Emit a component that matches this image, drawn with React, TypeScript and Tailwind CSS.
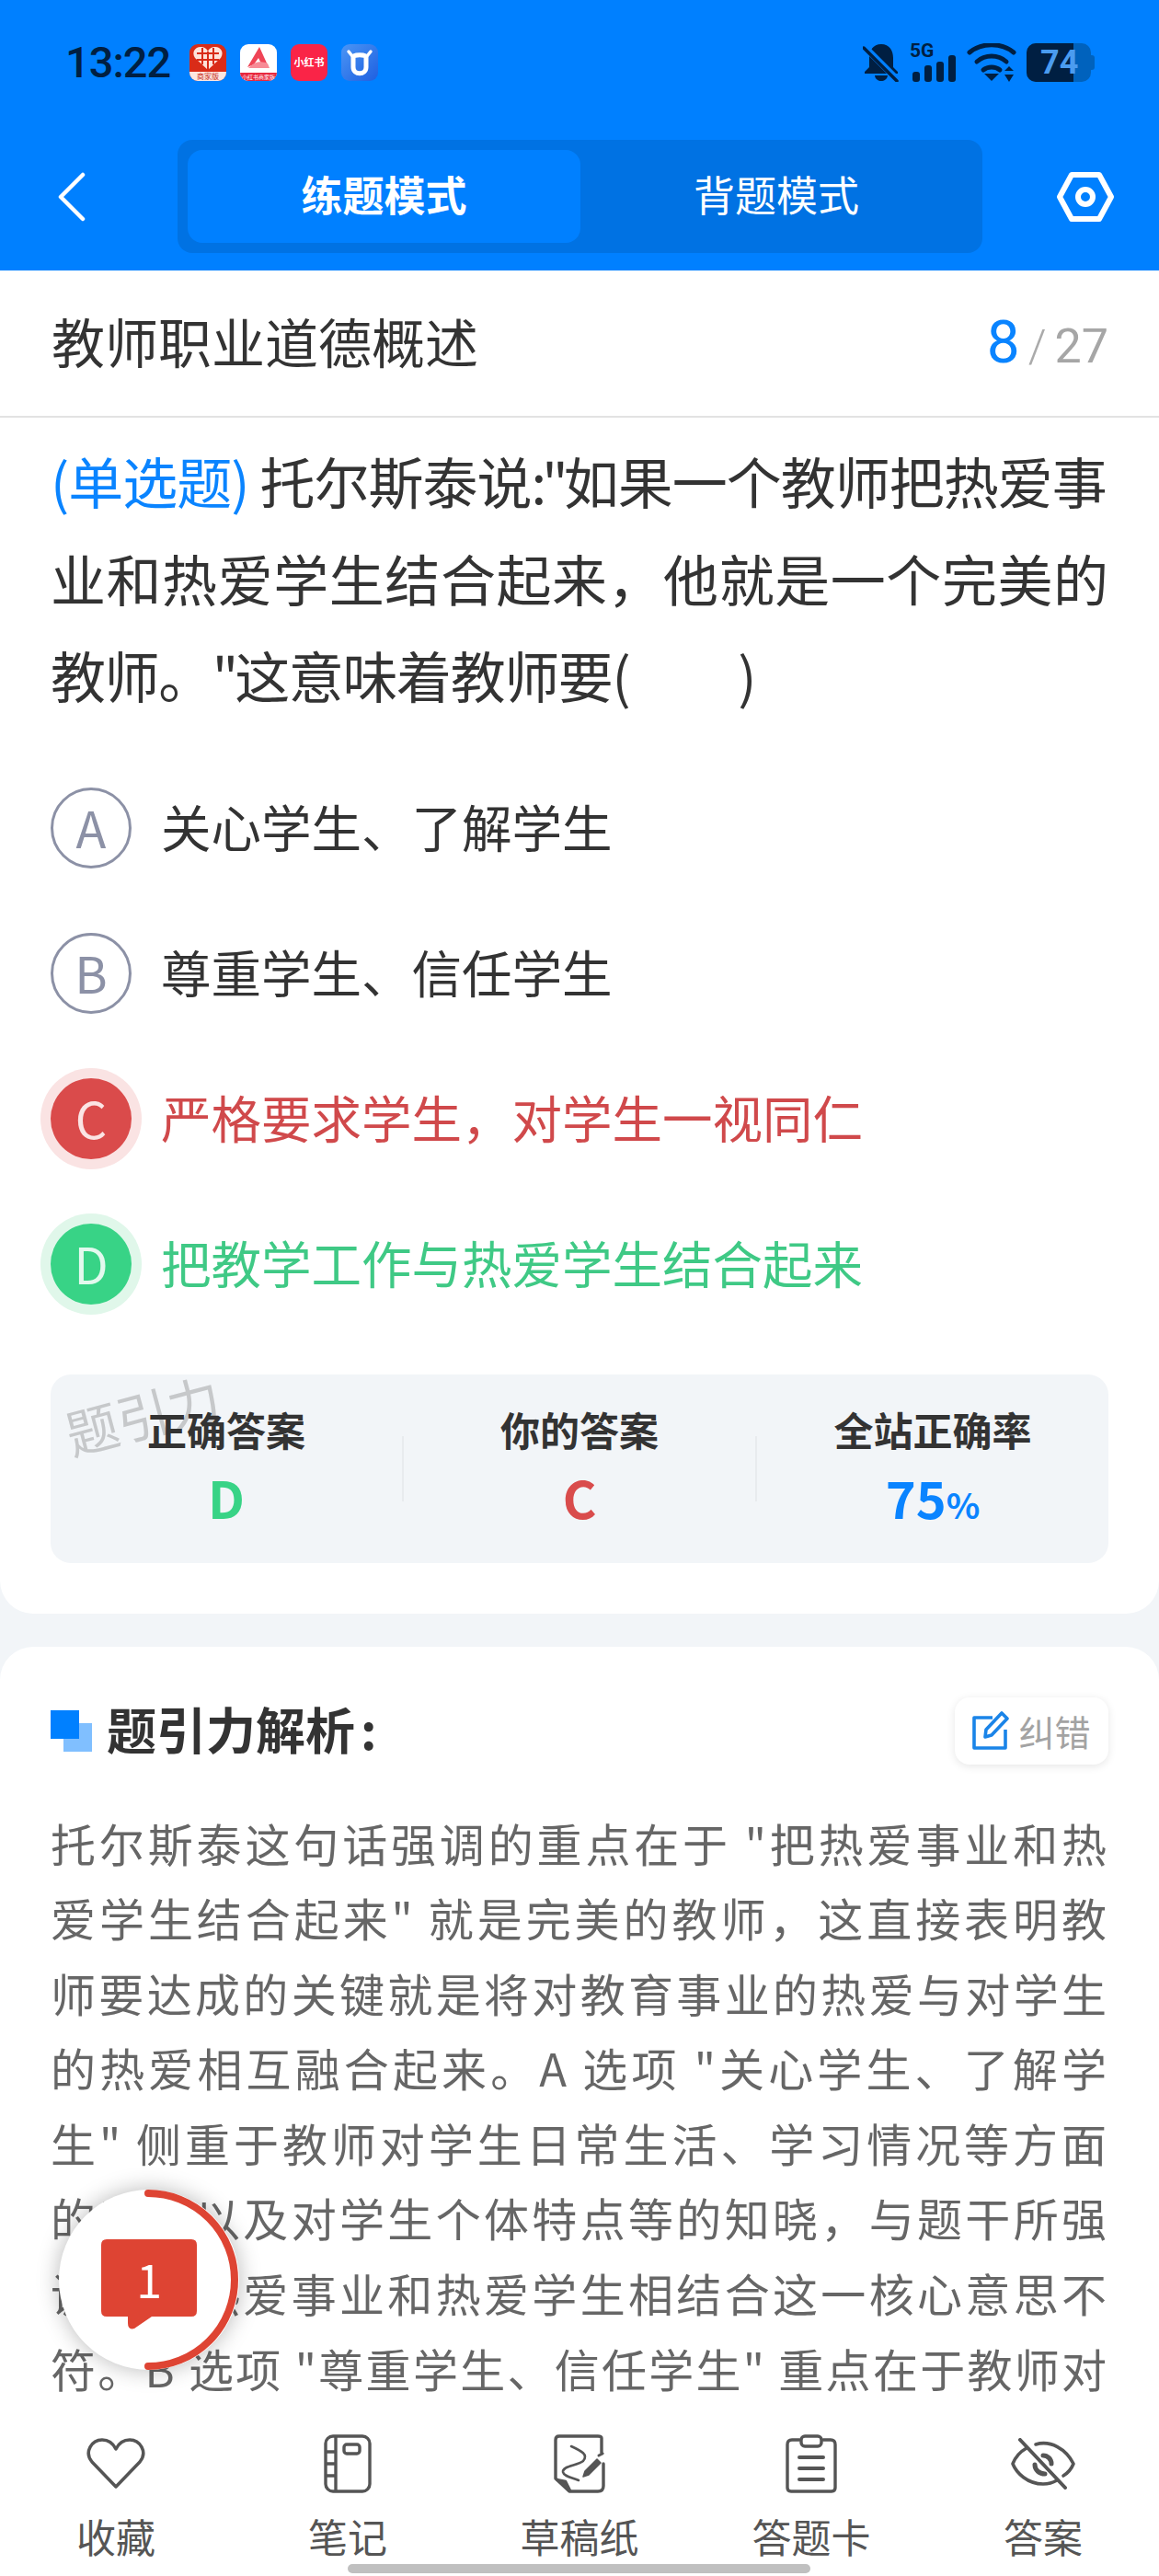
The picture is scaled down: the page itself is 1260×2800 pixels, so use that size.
const EXPLAIN_LINES = [
  '托尔斯泰这句话强调的重点在于 "把热爱事业和热',
  '爱学生结合起来" 就是完美的教师，这直接表明教',
  '师要达成的关键就是将对教育事业的热爱与对学生',
  '的热爱相互融合起来。A 选项 "关心学生、了解学',
  '生" 侧重于教师对学生日常生活、学习情况等方面',
  '的了解以及对学生个体特点等的知晓，与题干所强',
  '调的是热爱事业和热爱学生相结合这一核心意思不',
  '符。B 选项 "尊重学生、信任学生" 重点在于教师对',
];

const options = [
  { key: "A", text: "关心学生、了解学生", state: "idle" },
  { key: "B", text: "尊重学生、信任学生", state: "idle" },
  { key: "C", text: "严格要求学生，对学生一视同仁", state: "wrong" },
  { key: "D", text: "把教学工作与热爱学生结合起来", state: "right" },
];

function OptionBadge({ letter, state }: { letter: string; state: string }) {
  if (state === "wrong") {
    return (
      <div className="flex h-[88px] w-[88px] items-center justify-center rounded-full bg-[#da4b4b] pb-[3px] text-[54px] text-[#fbe4e4] shadow-[0_0_0_11px_#fae3e3]">
        {letter}
      </div>
    );
  }
  if (state === "right") {
    return (
      <div className="flex h-[88px] w-[88px] items-center justify-center rounded-full bg-[#38d386] pb-[3px] text-[54px] text-[#e3f9ee] shadow-[0_0_0_11px_#e0f7ea]">
        {letter}
      </div>
    );
  }
  return (
    <div className="flex h-[88px] w-[88px] items-center justify-center rounded-full border-[3px] border-[#8c91a6] pb-[3px] text-[54px] text-[#8c91a6]">
      {letter}
    </div>
  );
}

function StatusBar() {
  return (
    <div className="flex h-[152px] items-start justify-between pl-[71px] pr-[70px] pt-[47px]">
      <div className="flex items-center">
        <span className="w-[135px] font-['Roboto',sans-serif] text-[47px] leading-[41px] font-medium tracking-[-1px] text-[#001f42]">13:22</span>
        <div className="flex gap-[15px]">
          <div className="flex h-[40px] w-[40px] flex-col items-center justify-between overflow-hidden rounded-[9px] bg-[#d92c18]">
            <svg viewBox="0 0 40 30" className="h-[30px] w-[40px]">
              <path d="M20 28 L6 15 C2 9 6 3 12 3 C16 3 19 5 20 8 C21 5 24 3 28 3 C34 3 38 9 34 15 Z" fill="#fde3da" />
              <path d="M8 10 H32 M8 17 H32 M14 4 V22 M20 8 V28 M26 4 V22" stroke="#d92c18" strokeWidth="2" />
            </svg>
            <span className="h-[10px] w-full bg-[#fde7e0] text-center text-[8px] leading-[10px] text-[#c52c1a]">商家版</span>
          </div>
          <div className="flex h-[40px] w-[40px] flex-col items-center justify-between overflow-hidden rounded-[9px] bg-white">
            <svg viewBox="0 0 40 30" className="h-[30px] w-[40px]">
              <path d="M8 25 L21 3 L31 25 L25 25 L20 15 L15 22 Z" fill="#ef4456" />
              <path d="M9 26 C16 18 24 18 30 21 L32 26 Z" fill="#f78b96" />
            </svg>
            <span className="h-[9px] w-full bg-[#e8293f] text-center text-[6px] leading-[9px] whitespace-nowrap text-white">小红书商家版</span>
          </div>
          <div className="flex h-[40px] w-[40px] items-center justify-center rounded-[9px] bg-[#fa2447] text-[11px] font-bold whitespace-nowrap text-white">小红书</div>
          <div className="flex h-[40px] w-[40px] items-center justify-center rounded-[9px] bg-gradient-to-br from-[#4b95f5] to-[#1f5fe0]">
            <svg viewBox="0 0 40 40" className="h-[40px] w-[40px]" fill="none" stroke="white" strokeLinecap="round">
              <path d="M13 14 V25 C13 34 27 34 27 25 V14 C27 11 13 11 13 14 Z" strokeWidth="5" />
              <path d="M8 8 L12 13 M32 8 L28 13" strokeWidth="3.5" />
            </svg>
          </div>
        </div>
      </div>
      <div className="flex items-start">
        <svg viewBox="0 0 40 42" className="h-[42px] w-[40px]" fill="#001f42">
          <path d="M20 1 C11 1 7 8 7 16 V26 L2 31 V33 H38 V31 L33 26 V16 C33 8 29 1 20 1 Z" />
          <path d="M13 35 C14 43 26 43 27 35 Z" />
          <path d="M1 3 L37 39" stroke="#0080ff" strokeWidth="7" />
          <path d="M1 5 L37 41" stroke="#001f42" strokeWidth="3.5" strokeLinecap="round" />
        </svg>
        <div className="relative ml-[11px] h-[42px] w-[52px]">
          <span className="absolute top-[-3px] left-0 font-['Roboto',sans-serif] text-[21px] leading-[22px] font-bold text-[#001f42]">5G</span>
          <div className="absolute bottom-0 left-[3px] flex items-end gap-[5px]">
            <div className="h-[11px] w-[8px] rounded-[3px] bg-[#001f42]" />
            <div className="h-[18px] w-[8px] rounded-[3px] bg-[#001f42]" />
            <div className="h-[22px] w-[8px] rounded-[3px] bg-[#001f42]" />
            <div className="h-[29px] w-[8px] rounded-[3px] bg-[#001f42]" />
          </div>
        </div>
        <svg viewBox="0 0 54 42" className="ml-[10px] h-[42px] w-[54px]" fill="none" stroke="#001f42" strokeWidth="5" strokeLinecap="round">
          <path d="M3 10 C16 -1 38 -1 51 10" />
          <path d="M11 20 C20 12 34 12 43 20" />
          <path d="M18 29 C23 25 31 25 36 29" />
          <path d="M19 33 H35 L27 41 Z" fill="#001f42" stroke="none" />
          <path d="M41 29 L46 24 L51 29 Z M41 33 H51 L46 41 Z" fill="#001f42" stroke="none" transform="translate(0 1)" />
        </svg>
        <div className="relative ml-[11px] flex h-[42px] w-[74px] items-center">
          <div className="flex h-[42px] w-[70px] overflow-hidden rounded-[10px] bg-[#0062bd]">
            <div className="h-full w-[51px] bg-[#001f42]" />
          </div>
          <div className="h-[16px] w-[4px] rounded-r-[3px] bg-[#0062bd]" />
          <span className="absolute top-0 left-[15px] font-['Roboto',sans-serif] text-[36px] leading-[42px] font-bold text-[#4a9cf0]">74</span>
        </div>
      </div>
    </div>
  );
}

function NavBar() {
  return (
    <div className="flex h-[123px] items-center pr-[49px] pl-[62px]">
      <svg viewBox="0 0 32 54" className="h-[54px] w-[32px]" fill="none" stroke="white" strokeWidth="4.5" strokeLinecap="round" strokeLinejoin="round">
        <path d="M28 3 L4 27 L28 51" />
      </svg>
      <div className="ml-[99px] flex h-[123px] w-[875px] items-center rounded-[16px] bg-[#0072e3] pl-[11px]">
        <div className="flex h-[101px] w-[427px] items-center justify-center rounded-[16px] bg-[#0080ff] pb-[6px] text-[45px] font-bold text-white">练题模式</div>
        <div className="flex h-[101px] w-[426px] items-center justify-center pb-[6px] text-[45px] text-white">背题模式</div>
      </div>
      <svg viewBox="0 0 62 54" className="ml-auto h-[54px] w-[62px]" fill="none" stroke="white" strokeWidth="6" strokeLinejoin="round">
        <path d="M16 3 H46 L59 27 L46 51 H16 L3 27 Z" />
        <circle cx="31" cy="27" r="8" />
      </svg>
    </div>
  );
}

function Stat({ label, children }: { label: string; children: React.ReactNode }) {
  return (
    <div className="flex flex-1 flex-col items-center pt-[33px]">
      <div className="text-[43px] leading-[52px] font-bold text-[#333333]">{label}</div>
      <div className="mt-[15px] text-[56px] leading-[66px] font-bold">{children}</div>
    </div>
  );
}

function BottomItem({ label, icon }: { label: string; icon: React.ReactNode }) {
  return (
    <div className="flex flex-1 flex-col items-center">
      <div className="flex h-[64px] items-center justify-center">{icon}</div>
      <div className="mt-[21px] text-[43px] leading-[50px] text-[#555555]">{label}</div>
    </div>
  );
}

export default function App() {
  return (
    <div className="relative flex h-[2800px] w-[1260px] flex-col overflow-hidden bg-[#f2f5f8] font-['Noto_Sans_CJK_SC',sans-serif]">
      <header className="h-[294px] shrink-0 bg-[#0080ff]">
        <StatusBar />
        <NavBar />
      </header>

      <main className="flex-1 overflow-hidden">
        <section className="rounded-b-[36px] bg-white pb-[55px]">
          <div className="flex h-[160px] items-center justify-between border-b-[2px] border-[#e2e2e2] px-[55px]">
            <h1 className="pb-[6px] pl-[1px] text-[58px] leading-[80px] font-normal text-[#333333]">教师职业道德概述</h1>
            <div className="flex items-baseline font-['Roboto',sans-serif]">
              <span className="text-[64px] text-[#0a84ff]">8</span>
              <span className="mx-[9px] text-[50px] font-light text-[#aaaaaa]">/</span>
              <span className="text-[52px] text-[#a6a6a6]">27</span>
            </div>
          </div>

          <div className="px-[55px] pt-[15px] text-[60px] leading-[105.5px] whitespace-nowrap text-[#333333]">
            <p>
              <span className="tracking-[-1px] text-[#0a84ff]">(单选题)</span>
              <span className="ml-[12px] tracking-[-1px]">托尔斯泰说<span className="tracking-[-5px]">:"</span>如果一个教师把热爱事</span>
            </p>
            <p className="[text-align-last:justify]">业和热爱学生结合起来，他就是一个完美的</p>
            <p className="tracking-[-1.4px]">
              教师。<span className="tracking-[-4px]">"</span>这意味着教师要(<span className="inline-block w-[118px]" />)
            </p>
          </div>

          <div className="mt-[35px]">
            {options.map((o) => (
              <div key={o.key} className="flex h-[158px] items-center pl-[55px]">
                <OptionBadge letter={o.key} state={o.state} />
                <span
                  className={
                    o.state === "wrong"
                      ? "ml-[32px] pb-[4px] text-[54.5px] text-[#d0494b]"
                      : o.state === "right"
                        ? "ml-[32px] pb-[4px] text-[54.5px] text-[#3fc985]"
                        : "ml-[32px] pb-[4px] text-[54.5px] text-[#333333]"
                  }
                >
                  {o.text}
                </span>
              </div>
            ))}
          </div>

          <div className="relative mx-[55px] mt-[41px] flex h-[205px] rounded-[22px] bg-[#f2f5f8]">
            <span className="absolute top-[12px] left-[14px] -rotate-[15deg] text-[57px] leading-[60px] text-[#c6c8ca]">题引力</span>
            <div className="relative flex flex-1 flex-col items-center">
              <Stat label="正确答案">
                <span className="text-[#38d386]">D</span>
              </Stat>
            </div>
            <div className="mt-[67px] h-[71px] w-[2px] bg-[#e8ebee]" />
            <div className="relative flex flex-1 flex-col items-center">
              <Stat label="你的答案">
                <span className="text-[#d94c4c]">C</span>
              </Stat>
            </div>
            <div className="mt-[67px] h-[71px] w-[2px] bg-[#e8ebee]" />
            <div className="relative flex flex-1 flex-col items-center">
              <Stat label="全站正确率">
                <span className="text-[#0a84ff]">
                  75<span className="text-[38px]">%</span>
                </span>
              </Stat>
            </div>
          </div>
        </section>

        <section className="mt-[36px] rounded-t-[36px] bg-white px-[55px] pt-[55px]">
          <div className="flex h-[73px] items-center justify-between">
            <div className="flex items-center">
              <div className="relative h-[45px] w-[45px]">
                <div className="absolute top-[14px] left-[14px] h-[31px] w-[31px] bg-[#80bfff]" />
                <div className="absolute top-0 left-0 h-[31px] w-[31px] bg-[#0080ff]" />
              </div>
              <h2 className="ml-[16px] pb-[5px] text-[54px] leading-[73px] font-bold text-[#333333]">
                题引力解析<span className="ml-[6px]">:</span>
              </h2>
            </div>
            <div className="flex h-[73px] w-[167px] items-center justify-center rounded-[16px] bg-white shadow-[0_2px_10px_rgba(0,0,0,0.10)]">
              <svg viewBox="0 0 40 42" className="h-[42px] w-[40px]" fill="none" stroke="#1a84e8" strokeWidth="3.6" strokeLinejoin="round">
                <path d="M22 7 H2 V40 H36 V20" />
                <path d="M32 2 L38 8 L21 26 L14 28 L15 20 Z" />
              </svg>
              <span className="ml-[10px] text-[39px] text-[#a3a3a3]">纠错</span>
            </div>
          </div>

          <div className="mt-[44px]">
            {EXPLAIN_LINES.map((line) => (
              <p key={line} className="text-[49px] leading-[81.6px] tracking-[2px] whitespace-nowrap text-[#666666] [text-align-last:justify]">
                {line}
              </p>
            ))}
          </div>
        </section>
      </main>

      <footer className="flex h-[190px] shrink-0 bg-white pt-[36px]">
        <BottomItem
          label="收藏"
          icon={
            <svg viewBox="0 0 64 56" className="h-[56px] w-[64px]" fill="none" stroke="#555555" strokeWidth="3.5" strokeLinejoin="round">
              <path d="M32 53 L6 26 C-3 15 6 2 17 2 C24 2 29 6 32 12 C35 6 40 2 47 2 C58 2 67 15 58 26 Z" />
            </svg>
          }
        />
        <BottomItem
          label="笔记"
          icon={
            <svg viewBox="0 0 52 64" className="h-[64px] w-[52px]" fill="none" stroke="#555555" strokeWidth="3.4" strokeLinejoin="round">
              <rect x="2" y="2" width="48" height="60" rx="8" />
              <path d="M13 2 V62 M2 19 H13 M2 32 H13 M2 45 H13" />
              <rect x="22" y="11" width="17" height="10" rx="3" />
            </svg>
          }
        />
        <BottomItem
          label="草稿纸"
          icon={
            <svg viewBox="0 0 56 64" className="h-[64px] w-[56px]" fill="none" stroke="#555555" strokeLinecap="round" strokeLinejoin="round">
              <path d="M52 20 V4 Q52 2 48 2 H6 Q2 2 2 6 V48 L17 62 H48 Q54 62 54 56 V32" strokeWidth="3.4" />
              <path d="M3 49 L13 51 L18 61 Z" fill="#555555" strokeWidth="2.5" />
              <path d="M19 13 C30 18 38 22 32 29 C26 34 9 34 10 41 C11 46 20 47 27 50" strokeWidth="2.6" />
              <path d="M34 40 L47 27 L51 31 L38 44 L32 46 Z" fill="#555555" strokeWidth="1.5" />
              <path d="M49 23 L53 21" strokeWidth="3" />
            </svg>
          }
        />
        <BottomItem
          label="答题卡"
          icon={
            <svg viewBox="0 0 56 64" className="h-[64px] w-[56px]" fill="none" stroke="#555555" strokeWidth="3.4" strokeLinecap="round" strokeLinejoin="round">
              <path d="M15 6 H7 Q2 6 2 11 V58 Q2 62 6 62 H50 Q54 62 54 58 V11 Q54 6 49 6 H41" />
              <rect x="17" y="2" width="22" height="11" rx="4" />
              <path d="M15 25 H41 M15 37 H41 M15 49 H41" strokeWidth="4" />
            </svg>
          }
        />
        <BottomItem
          label="答案"
          icon={
            <svg viewBox="0 0 70 56" className="h-[56px] w-[70px]" fill="none" stroke="#555555" strokeWidth="3.6" strokeLinecap="round" strokeLinejoin="round">
              <path d="M17 11 C8 16 4 23 2 28 C6 38 18 50 35 50 C40 50 45 49 50 46 M27 7 C43 2 60 12 68 28 C66 33 62 38 57 41" />
              <path d="M35 19 C40 19 44 23 44 28 M26 29 C26 35 31 39 37 39" strokeWidth="5" />
              <path d="M10 2 L59 54" strokeWidth="4" />
            </svg>
          }
        />
      </footer>

      <div className="absolute top-[2380px] left-[64px] flex h-[196px] w-[196px] items-center justify-center rounded-full bg-white shadow-[0_0_24px_rgba(0,0,0,0.28)]">
        <svg viewBox="0 0 196 196" className="absolute inset-0 h-[196px] w-[196px]" fill="none">
          <path d="M97 4 A94 94 0 0 1 97 192" stroke="#de4433" strokeWidth="8" strokeLinecap="round" />
        </svg>
        <div className="relative mt-[10px]">
          <svg viewBox="0 0 104 98" className="h-[98px] w-[104px]" fill="#de4433">
            <path d="M6 0 H98 Q104 0 104 6 V78 Q104 84 98 84 H55 L36 97 Q29 99 29 91 V84 H6 Q0 84 0 78 V6 Q0 0 6 0 Z" />
          </svg>
          <span className="absolute top-0 left-0 flex h-[84px] w-[104px] items-center justify-center text-[50px] text-white">1</span>
        </div>
      </div>

      <div className="absolute top-[2787px] left-[378px] h-[10px] w-[503px] rounded-full bg-[#c0c0c0]" />
    </div>
  );
}
